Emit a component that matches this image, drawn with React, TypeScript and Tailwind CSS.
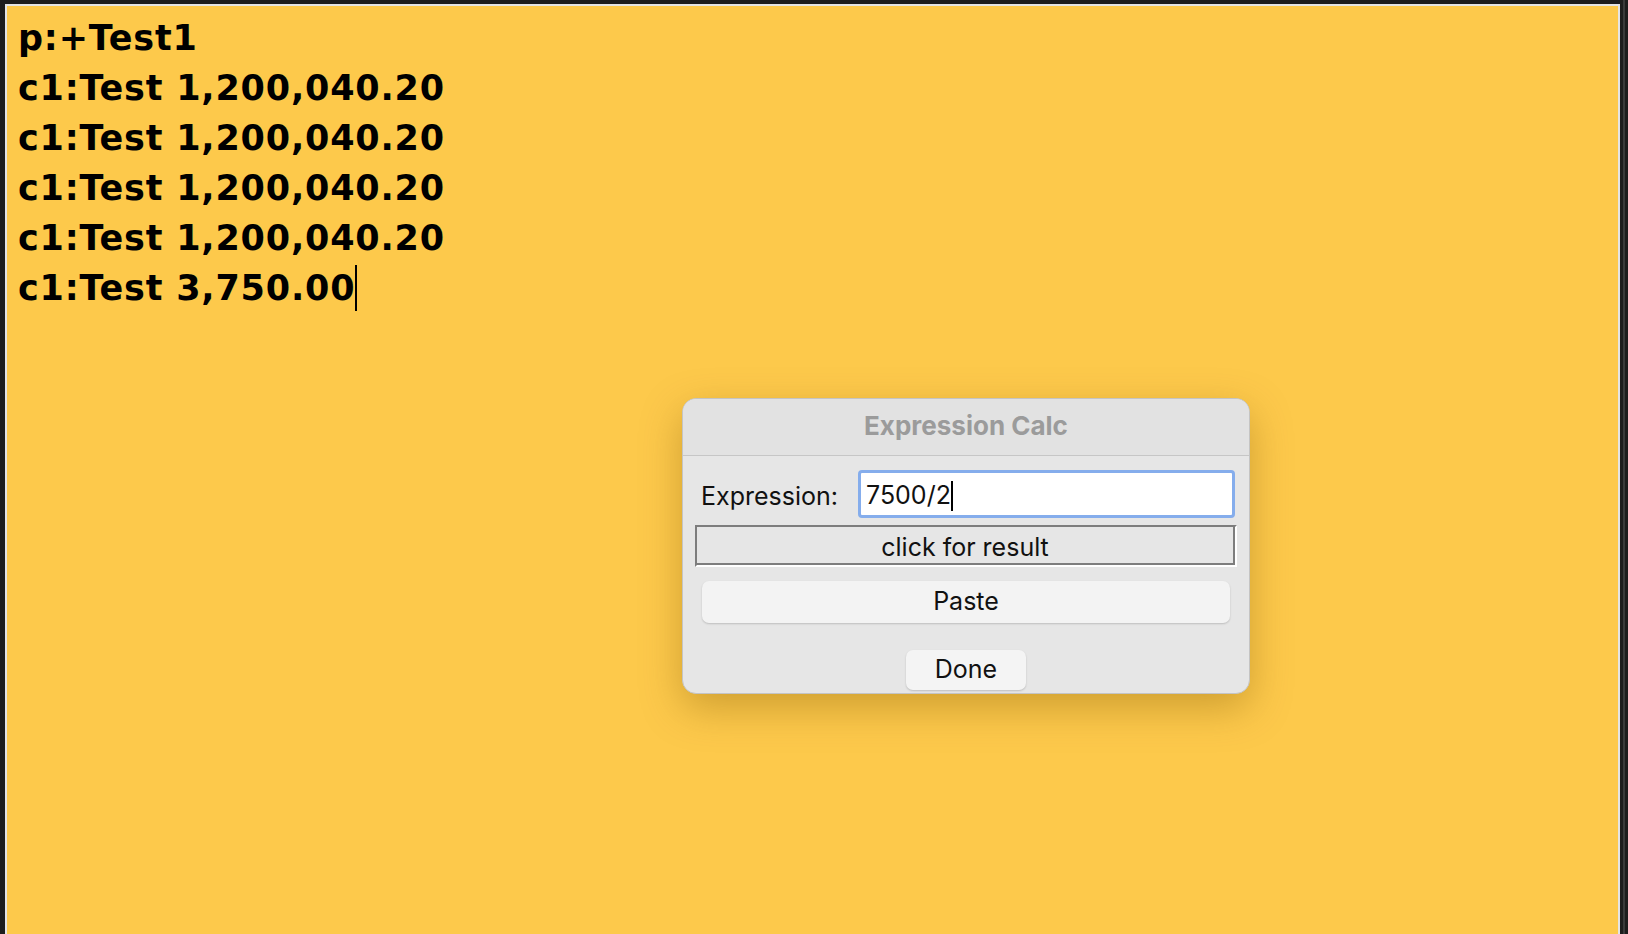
import React from 'react'

const lines = ['p:+Test1', 'c1:Test 1,200,040.20', 'c1:Test 1,200,040.20', 'c1:Test 1,200,040.20', 'c1:Test 1,200,040.20']

const ExpressionCalc = () => {
  return (
    <div className="absolute left-[675px] top-[392px] w-[568px] h-[296px] rounded-[14px] bg-[#e6e6e6] border border-[#c4c4c4] shadow-[0_14px_40px_rgba(120,80,0,0.35)] overflow-hidden font-['Inter',sans-serif] text-[#111]">
      <div className="h-[57px] flex items-center justify-center bg-[#e2e2e2] border-b border-[#c6c6c6] pb-[3px]">
        <span className="text-[26px] font-bold text-[#9b9b9b]">Expression Calc</span>
      </div>

      <div className="flex flex-col">
        <div className="flex items-center mt-[14px] pl-[18px] pr-[14px]">
          <span className="text-[25px] w-[157px] pt-[5px]">Expression:</span>
          <div className="flex-grow h-[48px] rounded-[4px] border-[3px] border-[#85adec] bg-white flex items-center pl-[5px] pt-[3px]">
            <span className="text-[25px]">7500/2</span>
            <span className="inline-block w-[2px] h-[30px] bg-black" />
          </div>
        </div>

        <div className="mt-[7px] mx-[12px] h-[42px] border-2 border-t-[#7d7d7d] border-l-[#7d7d7d] border-b-white border-r-white">
          <div className="h-full border-b-2 border-r-2 border-b-[#7d7d7d] border-r-[#7d7d7d] flex items-center justify-center pt-[6px]">
            <span className="text-[25px]">click for result</span>
          </div>
        </div>

        <div className="mt-[14px] mx-[19px] h-[42px] rounded-[7px] bg-[#f3f3f3] shadow-[0_1px_2px_rgba(0,0,0,0.18)] flex items-center justify-center">
          <span className="text-[25px]">Paste</span>
        </div>

        <div className="mt-[27px] flex justify-center">
          <div className="w-[120px] h-[40px] rounded-[7px] bg-[#f4f4f4] shadow-[0_1px_2px_rgba(0,0,0,0.18)] flex items-center justify-center">
            <span className="text-[25px]">Done</span>
          </div>
        </div>
      </div>
    </div>
  )
}

export default function App() {
  return (
    <div className="w-[1628px] h-[934px] bg-[#1d1d1d] flex overflow-hidden">
      <div className="w-[5px] bg-[#1d1d1d]" />
      <div className="flex-grow flex flex-col">
        <div className="h-[4px] bg-[#1d1d1d]" />
        <div className="relative flex-grow bg-[#fdc94b] border-l-2 border-t-2 border-r-2 border-[#e4e4e4] pt-[7px] pl-[11px]">
          <div className="font-['DejaVu_Sans',sans-serif] font-bold text-[35px] leading-[50px] tracking-[0.8px] text-black">
            {lines.map((line, i) => (
              <div key={i}>{line}</div>
            ))}
            <div className="flex items-center">
              <span>c1:Test 3,750.00</span>
              <span className="inline-block w-[2px] h-[46px] bg-black" />
            </div>
          </div>
          <ExpressionCalc />
        </div>
      </div>
      <div className="w-[3px] bg-[#1d1d1d]" />
      <div className="w-[2px] bg-[#3a3a3a]" />
      <div className="w-[3px] bg-[#1d1d1d]" />
    </div>
  )
}
